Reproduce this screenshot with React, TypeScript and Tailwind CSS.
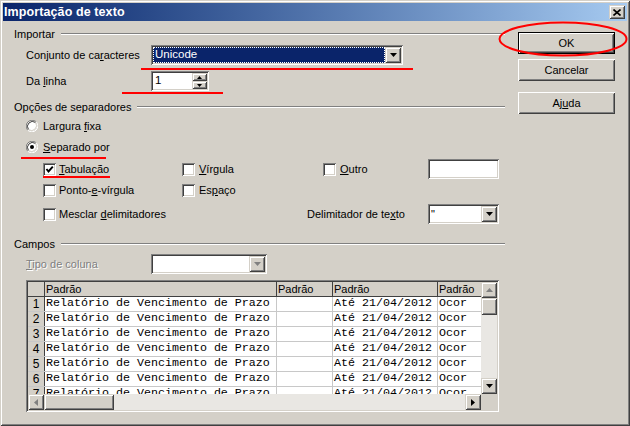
import React from 'react'

// Windows classic bevels
const raisedBtn = 'shadow-[inset_1px_1px_#ffffff,inset_-1px_-1px_#404040,inset_2px_2px_#d4d0c8,inset_-2px_-2px_#808080]'
const raisedArrow = 'shadow-[inset_1px_1px_#d4d0c8,inset_-1px_-1px_#404040,inset_2px_2px_#ffffff,inset_-2px_-2px_#808080]'
const sunken = 'shadow-[inset_1px_1px_#808080,inset_-1px_-1px_#ffffff,inset_2px_2px_#404040,inset_-2px_-2px_#d4d0c8]'

function Arrow({ dir = 'down', disabled = false }: { dir?: 'down' | 'up' | 'left' | 'right'; disabled?: boolean }) {
    const fill = disabled ? '#808080' : '#000000'
    if (dir === 'left' || dir === 'right') {
        const pts = dir === 'right' ? '0,0 4,3.5 0,7' : '4,0 0,3.5 4,7'
        return (
            <svg width="4" height="7" viewBox="0 0 4 7">
                <polygon points={pts} fill={fill} />
            </svg>
        )
    }
    const pts = dir === 'down' ? '0,0 7,0 3.5,4' : '0,4 7,4 3.5,0'
    return (
        <svg width="7" height="4" viewBox="0 0 7 4">
            <polygon points={pts} fill={fill} />
        </svg>
    )
}

function ArrowButton({ dir = 'down', disabled = false, className = '' }: { dir?: 'down' | 'up' | 'left' | 'right'; disabled?: boolean; className?: string }) {
    return (
        <div className={`w-[16px] h-[16px] shrink-0 bg-[#d4d0c8] flex items-center justify-center ${raisedArrow} ${className}`}>
            <Arrow dir={dir} disabled={disabled} />
        </div>
    )
}

function Combo({ width, children, disabled = false }: { width: string; children?: React.ReactNode; disabled?: boolean }) {
    return (
        <div className={`${width} h-[20px] bg-white p-[2px] flex ${sunken}`}>
            <div className="flex-1 min-w-0 flex items-center">{children}</div>
            <ArrowButton disabled={disabled} />
        </div>
    )
}

function Radio({ checked }: { checked?: boolean }) {
    return (
        <svg width="12" height="12" viewBox="0 0 12 12" className="shrink-0">
            <circle cx="6" cy="6" r="5" fill="#ffffff" />
            <path d="M10.24 1.76 A6 6 0 0 0 1.76 10.24" stroke="#808080" strokeWidth="1" fill="none" />
            <path d="M1.76 10.24 A6 6 0 0 0 10.24 1.76" stroke="#ffffff" strokeWidth="1" fill="none" />
            <path d="M9.5 2.5 A5 5 0 0 0 2.5 9.5" stroke="#404040" strokeWidth="1" fill="none" />
            <path d="M2.5 9.5 A5 5 0 0 0 9.5 2.5" stroke="#d4d0c8" strokeWidth="1" fill="none" />
            {checked && <circle cx="6" cy="6" r="2" fill="#000000" />}
        </svg>
    )
}

function Check({ checked }: { checked?: boolean }) {
    return (
        <div className={`w-[13px] h-[13px] shrink-0 bg-white flex items-center justify-center ${sunken}`}>
            {checked && (
                <svg width="9" height="9" viewBox="0 0 9 9">
                    <polyline points="1.5,4 3.5,6.5 7.8,1.6" stroke="#000000" strokeWidth="1.9" fill="none" />
                </svg>
            )}
        </div>
    )
}

function GroupTitle({ label, className = '' }: { label: string; className?: string }) {
    return (
        <div className={`flex items-center h-[14px] ${className}`}>
            <span>{label}</span>
            <div className="flex-1 ml-[6px] h-[2px] border-t border-t-[#808080] border-b border-b-white" />
        </div>
    )
}

function Button({ children, isDefault = false, className = '' }: { children: React.ReactNode; isDefault?: boolean; className?: string }) {
    if (isDefault) {
        return (
            <div className={`h-[22px] border border-black ${className}`}>
                <div className={`h-full bg-[#d4d0c8] flex items-center justify-center ${raisedBtn}`}>{children}</div>
            </div>
        )
    }
    return <div className={`h-[22px] bg-[#d4d0c8] flex items-center justify-center ${raisedBtn} ${className}`}>{children}</div>
}

const rowCount = 7

export default function App() {
    return (
        <div className="relative w-[630px] h-[426px] bg-[#d4d0c8] p-[3px] flex flex-col overflow-hidden font-['Liberation_Sans',Arial,sans-serif] text-[11px] text-black leading-none shadow-[inset_1px_1px_#d4d0c8,inset_-1px_-1px_#404040,inset_2px_2px_#ffffff,inset_-2px_-2px_#808080]">
            {/* title bar */}
            <div className="h-[18px] shrink-0 flex items-center justify-between bg-gradient-to-r from-[#0a246a] to-[#a6caf0] pl-[1px] pr-[2px]">
                <span className="text-white font-bold text-[12.5px] tracking-[0.1px]">Importação de texto</span>
                <div className={`w-[16px] h-[14px] bg-[#d4d0c8] flex items-center justify-center ${raisedArrow}`}>
                    <svg width="8" height="7" viewBox="0 0 8 7">
                        <path d="M0.5 0.5 L7.5 6.5 M7.5 0.5 L0.5 6.5" stroke="#000000" strokeWidth="1.6" />
                    </svg>
                </div>
            </div>

            <div className="flex-1 flex pl-[11px]">
                {/* left column */}
                <div className="w-[491px] flex flex-col">
                    <GroupTitle label="Importar" className="mt-[6px]" />
                    <div className="flex items-center mt-[4px] ml-[12px] h-[20px]">
                        <span className="w-[125px]">Conjunto de ca<u>r</u>acteres</span>
                        <div className={`w-[252px] h-[20px] bg-white p-[2px] flex ${sunken}`}>
                            <div className="flex-1 bg-[#0a246a] border border-dotted border-white flex items-center pl-[1px] text-white text-[11.5px]">
                                Unicode
                            </div>
                            <ArrowButton />
                        </div>
                    </div>
                    <div className="flex items-center mt-[6px] ml-[12px] h-[20px]">
                        <span className="w-[125px]">Da <u>l</u>inha</span>
                        <div className={`w-[58px] h-[20px] bg-white p-[2px] flex ${sunken}`}>
                            <div className="flex-1 flex items-center pl-[2px] text-[11.5px]">1</div>
                            <div className="w-[15px] flex flex-col">
                                <div className={`flex-1 bg-[#d4d0c8] flex items-center justify-center ${raisedArrow}`}>
                                    <svg width="5" height="3" viewBox="0 0 5 3"><polygon points="0,3 5,3 2.5,0" fill="#000" /></svg>
                                </div>
                                <div className={`flex-1 bg-[#d4d0c8] flex items-center justify-center ${raisedArrow}`}>
                                    <svg width="5" height="3" viewBox="0 0 5 3"><polygon points="0,0 5,0 2.5,3" fill="#000" /></svg>
                                </div>
                            </div>
                        </div>
                    </div>

                    <GroupTitle label="Opções de separadores" className="mt-[9px]" />
                    <div className="flex items-center gap-[5px] mt-[5px] ml-[12px] h-[14px]">
                        <Radio />
                        <span>Largura <u>f</u>ixa</span>
                    </div>
                    <div className="flex items-center gap-[5px] mt-[7px] ml-[12px] h-[14px]">
                        <Radio checked />
                        <span><u>S</u>eparado por</span>
                    </div>
                    <div className="flex items-center mt-[5px] ml-[29px] h-[20px]">
                        <div className="w-[139px] flex items-center gap-[3px]">
                            <Check checked />
                            <span><u>T</u>abulação</span>
                        </div>
                        <div className="w-[141px] flex items-center gap-[4px]">
                            <Check />
                            <span><u>V</u>írgula</span>
                        </div>
                        <div className="w-[105px] flex items-center gap-[4px]">
                            <Check />
                            <span><u>O</u>utro</span>
                        </div>
                        <div className={`w-[71px] h-[20px] bg-white ${sunken}`} />
                    </div>
                    <div className="flex items-center mt-[4px] ml-[29px] h-[14px]">
                        <div className="w-[139px] flex items-center gap-[3px]">
                            <Check />
                            <span>Ponto-<u>e</u>-vírgula</span>
                        </div>
                        <div className="w-[141px] flex items-center gap-[4px]">
                            <Check />
                            <span>Es<u>p</u>aço</span>
                        </div>
                    </div>
                    <div className="flex items-center mt-[7px] ml-[29px] h-[20px]">
                        <div className="w-[264px] flex items-center gap-[3px]">
                            <Check />
                            <span>Mesclar <u>d</u>elimitadores</span>
                        </div>
                        <span className="w-[121px]">Delimitador de te<u>x</u>to</span>
                        <Combo width="w-[71px]">
                            <span className="pl-[1px] text-[11px]">"</span>
                        </Combo>
                    </div>

                    <GroupTitle label="Campos" className="mt-[13px]" />
                    <div className="flex items-center mt-[3px] ml-[12px] h-[20px]">
                        <span className="w-[125px] text-[#808080] [text-shadow:1px_1px_0_#ffffff]"><u>T</u>ipo de coluna</span>
                        <Combo width="w-[116px]" disabled />
                    </div>

                    {/* preview table */}
                    <div className={`mt-[6px] ml-[12px] w-[473px] h-[132px] bg-white p-[2px] flex flex-col ${sunken}`}>
                        <div className="flex-1 flex min-h-0">
                            <div className="flex-1 min-w-0 overflow-hidden flex flex-col">
                                <div className="h-[15px] shrink-0 flex bg-[#d4d0c8] border-b border-b-[#404040]">
                                    <div className="w-[17px] shrink-0 border-r border-r-[#404040]" />
                                    <div className="w-[232px] shrink-0 border-r border-r-[#404040] pl-[1px] flex items-center">Padrão</div>
                                    <div className="w-[56px] shrink-0 border-r border-r-[#404040] pl-[1px] flex items-center">Padrão</div>
                                    <div className="w-[105px] shrink-0 border-r border-r-[#404040] pl-[1px] flex items-center">Padrão</div>
                                    <div className="w-[60px] shrink-0 pl-[1px] flex items-center">Padrão</div>
                                </div>
                                {Array.from({ length: rowCount }, (_, i) => (
                                    <div key={i} className="h-[15px] shrink-0 flex border-b border-b-[#c8c8c8] font-['Liberation_Mono',monospace] text-[11.67px]">
                                        <div className="w-[17px] shrink-0 bg-[#d4d0c8] border-r border-r-[#404040] flex items-center justify-center font-['Liberation_Sans',Arial,sans-serif] text-[12px]">
                                            {i + 1}
                                        </div>
                                        <div className="w-[232px] shrink-0 border-r border-r-[#c8c8c8] pl-[1px] flex items-center whitespace-pre">Relatório de Vencimento de Prazo</div>
                                        <div className="w-[56px] shrink-0 border-r border-r-[#c8c8c8]" />
                                        <div className="w-[105px] shrink-0 border-r border-r-[#c8c8c8] pl-[1px] flex items-center whitespace-pre">Até 21/04/2012</div>
                                        <div className="w-[60px] shrink-0 pl-[1px] flex items-center">Ocor</div>
                                    </div>
                                ))}
                            </div>
                            {/* vertical scrollbar */}
                            <div className="w-[16px] shrink-0 flex flex-col bg-[#e9e7e3]">
                                <ArrowButton dir="up" disabled />
                                <div className={`h-[17px] bg-[#d4d0c8] ${raisedArrow}`} />
                                <div className="flex-1" />
                                <ArrowButton dir="down" />
                            </div>
                        </div>
                        {/* horizontal scrollbar */}
                        <div className="h-[16px] shrink-0 flex">
                            <div className="flex-1 flex bg-[#e9e7e3]">
                                <ArrowButton dir="left" disabled />
                                <div className={`w-[70px] h-[16px] bg-[#d4d0c8] ${raisedArrow}`} />
                                <div className="flex-1" />
                                <ArrowButton dir="right" />
                            </div>
                            <div className="w-[16px] bg-[#d4d0c8]" />
                        </div>
                    </div>
                </div>

                {/* buttons */}
                <div className="w-[97px] ml-[13px] mt-[11px] flex flex-col">
                    <Button isDefault>OK</Button>
                    <Button className="mt-[5px]">Cancelar</Button>
                    <Button className="mt-[11px]">Aj<u>u</u>da</Button>
                </div>
            </div>

            {/* red annotation marks drawn over the screenshot */}
            <div className="absolute left-[141px] top-[68px] w-[272px] h-[2px] bg-[#ff0000]" />
            <div className="absolute left-[122px] top-[92px] w-[101px] h-[2px] bg-[#ff0000]" />
            <div className="absolute left-[21px] top-[157px] w-[85px] h-[2px] bg-[#ff0000]" />
            <div className="absolute left-[43px] top-[176px] w-[67px] h-[2px] bg-[#ff0000]" />
            <svg className="absolute left-[496px] top-[19px]" width="134" height="40" viewBox="0 0 134 40">
                <ellipse cx="67" cy="20" rx="63.5" ry="16.5" stroke="#ff0000" strokeWidth="2" fill="none" />
            </svg>
        </div>
    )
}
